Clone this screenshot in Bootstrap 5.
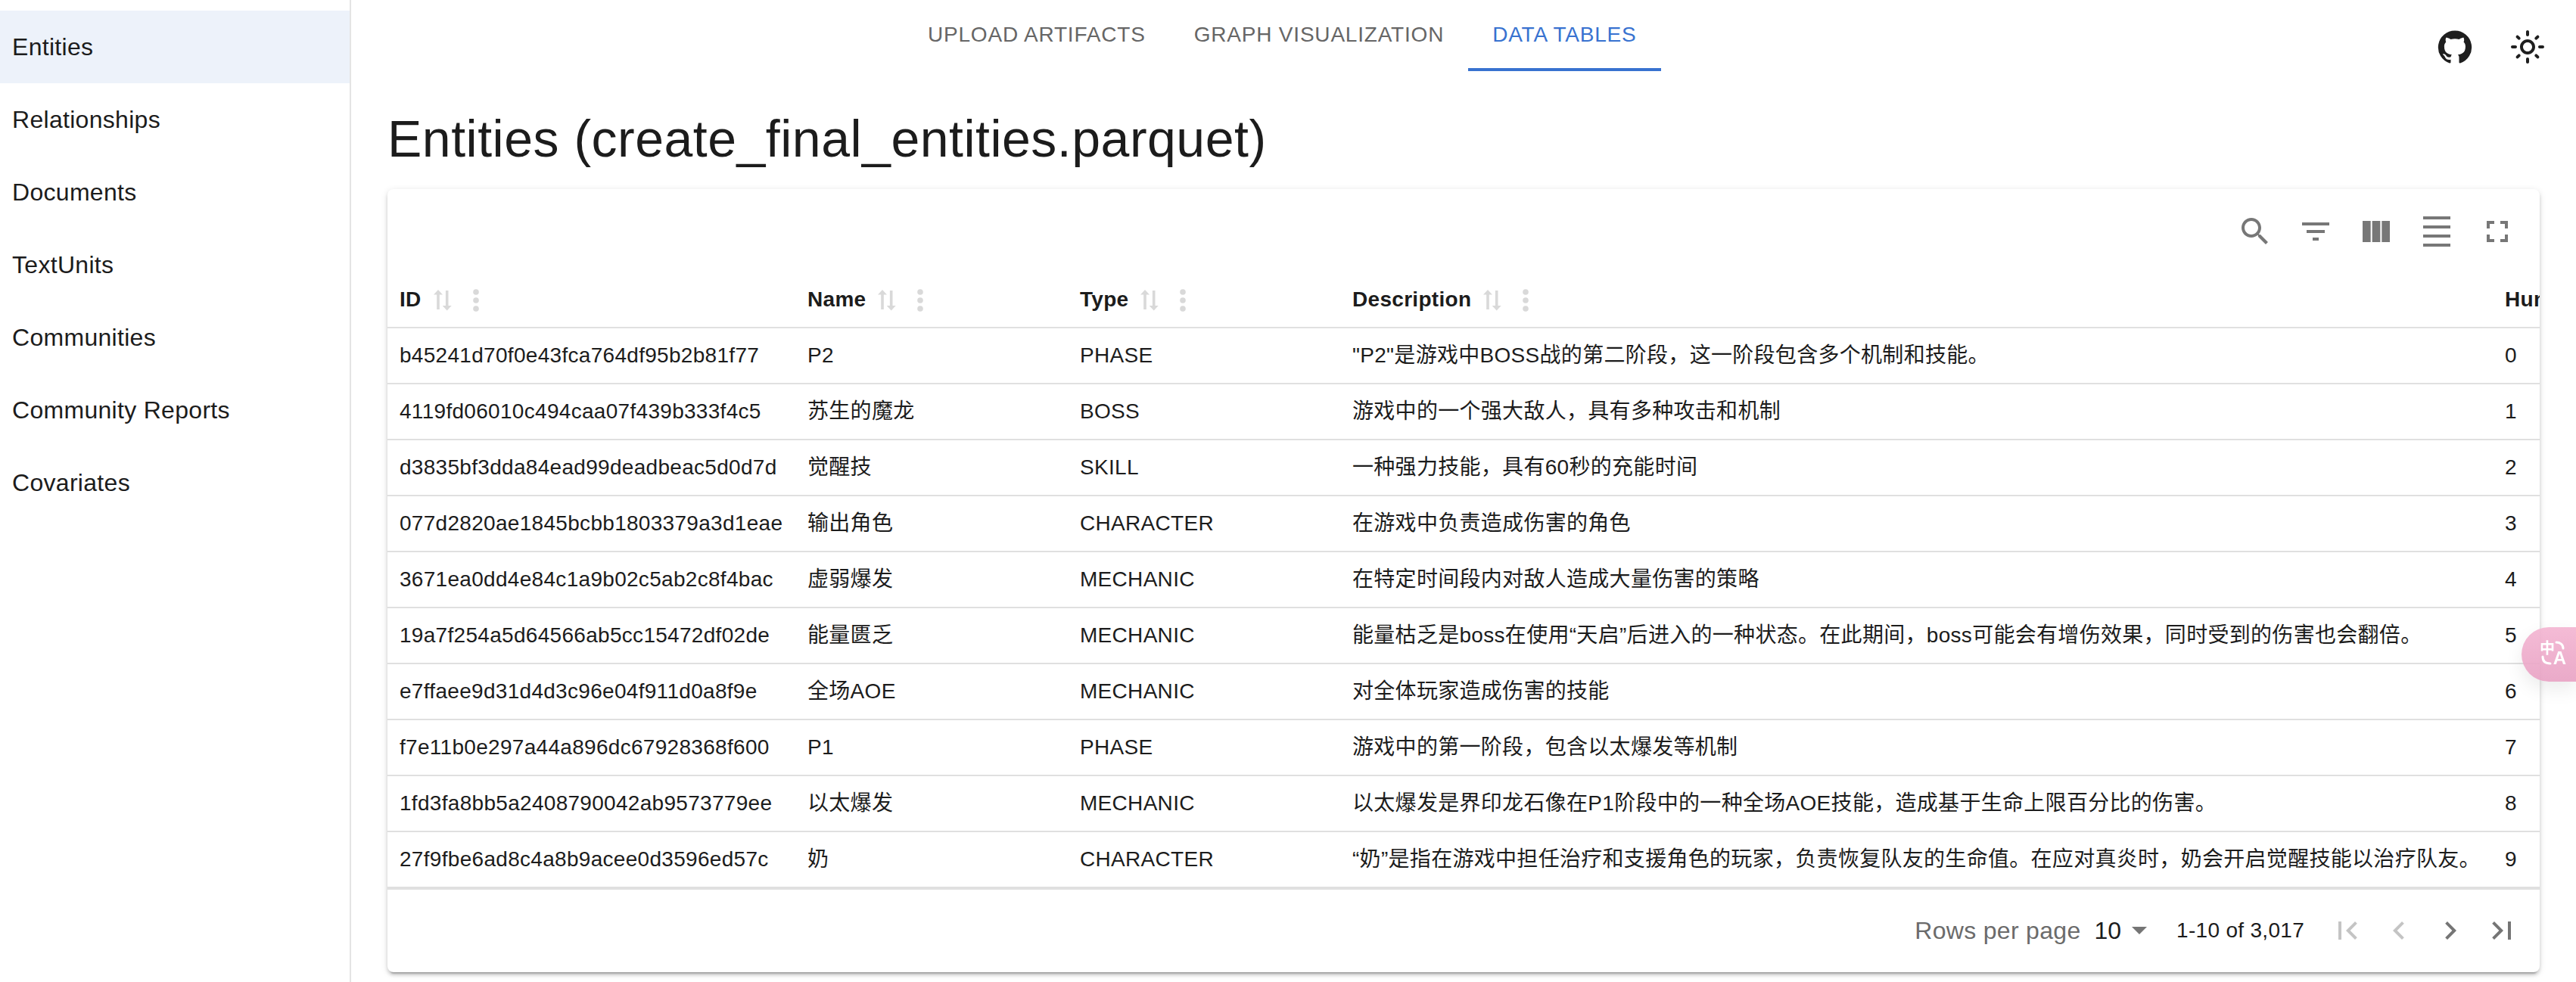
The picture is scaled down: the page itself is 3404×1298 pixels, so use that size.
<!DOCTYPE html>
<html lang="zh">
<head>
  <meta charset="UTF-8" />
  <meta name="viewport" content="width=device-width, initial-scale=1" />
  <title>GraphRAG Visualizer</title>
  <link href="https://cdn.jsdelivr.net/npm/bootstrap@5.3.3/dist/css/bootstrap.min.css" rel="stylesheet" />
  <style>
    html, body { height: 1298px; overflow: hidden; }
    body { font-family: "Liberation Sans", "Noto Sans CJK SC", sans-serif; color: #1c1c1c; background: #fff; }

    .side-drawer { width: 464px; flex: none; height: 1298px; border-right: 2px solid #e4e4e4; padding-top: 14px; }
    .side-item { height: 96px; padding: 0 16px; font-size: 32px; letter-spacing: .3px; display: flex; align-items: center; color: #1c1c1c; border: 0; }
    .side-item.active { background: #edf2fa; color: #1c1c1c; }

    .main-pane { min-width: 0; }
    .tab-bar { height: 94px; padding-left: 730px; }
    .tab-item { height: 94px; padding: 2px 32px 0; font-size: 28px; letter-spacing: .8px; text-transform: uppercase; color: #666; display: flex; align-items: center; border-bottom: 4px solid transparent; }
    .tab-item.active { color: #3872d0; border-bottom-color: #3872d0; }
    .top-icons { gap: 48px; padding: 38px 40px 0 0; }
    .top-icons svg { width: 48px; height: 48px; fill: #1f1f1f; display: block; }

    .content-wrap { margin: 0 48px; }
    .page-title { font-size: 68px; line-height: 84px; font-weight: 400; letter-spacing: .5px; margin: 47px 0 25px; }

    .data-paper { height: 1035px; border: 0; border-radius: 8px; overflow: hidden;
      box-shadow: 0 6px 2px -4px rgba(0,0,0,.2), 0 4px 4px rgba(0,0,0,.14), 0 2px 10px rgba(0,0,0,.12); }
    .tool-row { height: 96px; padding: 16px 16px 0 0; }
    .tool-btn { width: 80px; height: 80px; display: flex; align-items: center; justify-content: center; }
    .tool-btn svg { width: 48px; height: 48px; fill: #777; }

    .grid-clip { overflow: hidden; }
    .grid-table { table-layout: fixed; width: 2982px; margin: 0; font-size: 28px; letter-spacing: .3px; color: #1c1c1c; }
    .grid-table th, .grid-table td { padding: 0 16px; vertical-align: middle; white-space: nowrap; overflow: hidden; border-bottom: 2px solid #e0e0e0; }
    .grid-table th { height: 87px; font-weight: 700; }
    .grid-table td { height: 74px; }
    .head-wrap { display: flex; align-items: center; padding-top: 14px; }
    .head-wrap svg { width: 36px; height: 36px; margin-left: 9px; flex: none; fill: #d9d9d9; }

    .pager-row { height: 110px; border-top: 2px solid #e0e0e0; padding-right: 16px; }
    .rows-label { font-size: 32px; letter-spacing: .3px; color: #6b6b6b; }
    .rows-value { font-size: 32px; margin-left: 18px; }
    .rows-caret { width: 0; height: 0; margin: 0 39px 0 14px; border-left: 10px solid transparent; border-right: 10px solid transparent; border-top: 10px solid #757575; }
    .rows-range { font-size: 28px; letter-spacing: .3px; margin-right: 23px; }
    .page-btn { width: 68px; height: 48px; display: flex; justify-content: center; }
    .page-btn svg { width: 48px; height: 48px; fill: #757575; }
    .page-btn.off svg { fill: #c4c4c4; }

    .translate-tab { position: fixed; right: 0; top: 829px; width: 72px; height: 72px; border-radius: 36px 0 0 36px;
      background: linear-gradient(180deg, rgba(243,178,208,.88), rgba(231,158,193,.88)); box-shadow: 0 10px 24px rgba(0,0,0,.08); }
    .translate-tab svg { display: block; width: 72px; height: 72px; }
  </style>
</head>
<body>
  <div class="d-flex">
    <aside class="side-drawer">
      <div class="list-group list-group-flush">
        <div class="list-group-item side-item active">Entities</div>
        <div class="list-group-item side-item">Relationships</div>
        <div class="list-group-item side-item">Documents</div>
        <div class="list-group-item side-item">TextUnits</div>
        <div class="list-group-item side-item">Communities</div>
        <div class="list-group-item side-item">Community Reports</div>
        <div class="list-group-item side-item">Covariates</div>
      </div>
    </aside>

    <main class="main-pane flex-grow-1">
      <div class="d-flex tab-bar">
        <div class="tab-item">Upload Artifacts</div>
        <div class="tab-item">Graph Visualization</div>
        <div class="tab-item active">Data Tables</div>
        <div class="d-flex top-icons ms-auto">
          <svg viewBox="0 0 24 24"><path d="M12 1.27a11 11 0 00-3.48 21.46c.55.09.73-.28.73-.55v-1.84c-3.03.64-3.67-1.46-3.67-1.46-.55-1.29-1.28-1.65-1.28-1.65-.92-.65.1-.65.1-.65 1.1 0 1.73 1.1 1.73 1.1.92 1.65 2.57 1.2 3.21.92a2 2 0 01.64-1.47c-2.47-.27-5.04-1.19-5.04-5.5 0-1.1.46-2.1 1.2-2.84a3.76 3.76 0 010-2.93s.91-.28 3.11 1.1c1.8-.49 3.7-.49 5.5 0 2.1-1.38 3.02-1.1 3.02-1.1a3.76 3.76 0 010 2.93c.83.74 1.2 1.74 1.2 2.94 0 4.21-2.57 5.13-5.04 5.4.45.37.82.92.82 2.02v3.03c0 .27.1.64.73.55A11 11 0 0012 1.27"/></svg>
          <svg viewBox="0 0 24 24"><path d="M12 9c1.65 0 3 1.35 3 3s-1.35 3-3 3-3-1.35-3-3 1.35-3 3-3m0-2c-2.76 0-5 2.24-5 5s2.24 5 5 5 5-2.24 5-5-2.24-5-5-5zM2 13h2c.55 0 1-.45 1-1s-.45-1-1-1H2c-.55 0-1 .45-1 1s.45 1 1 1zm18 0h2c.55 0 1-.45 1-1s-.45-1-1-1h-2c-.55 0-1 .45-1 1s.45 1 1 1zM11 2v2c0 .55.45 1 1 1s1-.45 1-1V2c0-.55-.45-1-1-1s-1 .45-1 1zm0 18v2c0 .55.45 1 1 1s1-.45 1-1v-2c0-.55-.45-1-1-1s-1 .45-1 1zM5.99 4.58c-.39-.39-1.03-.39-1.41 0-.39.39-.39 1.03 0 1.41l1.06 1.06c.39.39 1.03.39 1.41 0s.39-1.03 0-1.41L5.99 4.58zm12.37 12.37c-.39-.39-1.03-.39-1.41 0-.39.39-.39 1.03 0 1.41l1.06 1.06c.39.39 1.03.39 1.41 0 .39-.39.39-1.03 0-1.41l-1.06-1.06zm1.06-10.96c.39-.39.39-1.03 0-1.41-.39-.39-1.03-.39-1.41 0l-1.06 1.06c-.39.39-.39 1.03 0 1.41s1.03.39 1.41 0l1.06-1.06zM7.05 18.36c.39-.39.39-1.03 0-1.41-.39-.39-1.03-.39-1.41 0l-1.06 1.06c-.39.39-.39 1.03 0 1.41s1.03.39 1.41 0l1.06-1.06z"/></svg>
        </div>
      </div>

      <div class="content-wrap">
        <h1 class="page-title">Entities (create_final_entities.parquet)</h1>

        <div class="card data-paper">
          <div class="d-flex justify-content-end tool-row">
            <div class="tool-btn"><svg viewBox="0 0 24 24"><path d="M15.5 14h-.79l-.28-.27C15.41 12.59 16 11.11 16 9.5 16 5.91 13.09 3 9.5 3S3 5.91 3 9.5 5.91 16 9.5 16c1.61 0 3.09-.59 4.23-1.57l.27.28v.79l5 4.99L20.49 19l-4.99-5zm-6 0C7.01 14 5 11.99 5 9.5S7.01 5 9.5 5 14 7.01 14 9.5 11.99 14 9.5 14z"/></svg></div>
            <div class="tool-btn"><svg viewBox="0 0 24 24"><path d="M10 18h4v-2h-4v2zM3 6v2h18V6H3zm3 7h12v-2H6v2z"/></svg></div>
            <div class="tool-btn"><svg viewBox="0 0 24 24"><path d="M14.67 5v14H9.33V5h5.34zm1 14H21V5h-5.33v14zm-7.34 0V5H3v14h5.33z"/></svg></div>
            <div class="tool-btn"><svg viewBox="0 0 24 24"><path d="M3 2h18v2H3zm0 18h18v2H3zm0-6h18v2H3zm0-6h18v2H3z"/></svg></div>
            <div class="tool-btn"><svg viewBox="0 0 24 24"><path d="M7 14H5v5h5v-2H7v-3zm-2-4h2V7h3V5H5v5zm12 7h-3v2h5v-5h-2v3zM14 5v2h3v3h2V5h-5z"/></svg></div>
          </div>

          <div class="grid-clip">
            <table class="table grid-table">
              <colgroup>
                <col style="width: 539px" /><col style="width: 360px" /><col style="width: 360px" /><col style="width: 1523px" /><col style="width: 200px" />
              </colgroup>
              <thead><tr id="headRow"></tr></thead>
              <tbody id="bodyRows"></tbody>
            </table>
          </div>

          <div class="d-flex justify-content-end align-items-center pager-row">
            <span class="rows-label">Rows per page</span>
            <span class="rows-value">10</span>
            <span class="rows-caret"></span>
            <span class="rows-range">1-10 of 3,017</span>
            <div class="page-btn off"><svg viewBox="0 0 24 24"><path d="M18.41 16.59 13.82 12l4.59-4.59L17 6l-6 6 6 6zM6 6h2v12H6z"/></svg></div>
            <div class="page-btn off"><svg viewBox="0 0 24 24"><path d="M15.41 7.41 14 6l-6 6 6 6 1.41-1.41L10.83 12z"/></svg></div>
            <div class="page-btn"><svg viewBox="0 0 24 24"><path d="M10 6 8.59 7.41 13.17 12l-4.58 4.59L10 18l6-6z"/></svg></div>
            <div class="page-btn"><svg viewBox="0 0 24 24"><path d="M5.59 7.41 10.18 12l-4.59 4.59L7 18l6-6-6-6zM16 6h2v12h-2z"/></svg></div>
          </div>
        </div>
      </div>
    </main>
  </div>

  <div class="translate-tab">
    <svg viewBox="0 0 72 72">
      <text x="34" y="35" text-anchor="middle" font-size="20" font-weight="700" fill="#fff" font-family="Noto Sans CJK SC, sans-serif">中</text>
      <text x="50.5" y="49" text-anchor="middle" font-size="24" font-weight="700" fill="#fff" font-family="Liberation Sans, sans-serif">A</text>
      <path d="M46 20c5 0 9 3 9 8M28 39c0 6 3 9 10 9" fill="none" stroke="#fff" stroke-width="3" stroke-linecap="round"/>
    </svg>
  </div>

  <script src="https://cdn.jsdelivr.net/npm/bootstrap@5.3.3/dist/js/bootstrap.bundle.min.js"></script>
  <script>
    const columns = ["ID", "Name", "Type", "Description", "Human readable ID"];

    const rows = [
      ["b45241d70f0e43fca764df95b2b81f77", "P2", "PHASE", "\"P2\"是游戏中BOSS战的第二阶段，这一阶段包含多个机制和技能。"],
      ["4119fd06010c494caa07f439b333f4c5", "苏生的魔龙", "BOSS", "游戏中的一个强大敌人，具有多种攻击和机制"],
      ["d3835bf3dda84ead99deadbeac5d0d7d", "觉醒技", "SKILL", "一种强力技能，具有60秒的充能时间"],
      ["077d2820ae1845bcbb1803379a3d1eae", "输出角色", "CHARACTER", "在游戏中负责造成伤害的角色"],
      ["3671ea0dd4e84c1a9b02c5ab2c8f4bac", "虚弱爆发", "MECHANIC", "在特定时间段内对敌人造成大量伤害的策略"],
      ["19a7f254a5d64566ab5cc15472df02de", "能量匮乏", "MECHANIC", "能量枯乏是boss在使用“天启”后进入的一种状态。在此期间，boss可能会有增伤效果，同时受到的伤害也会翻倍。"],
      ["e7ffaee9d31d4d3c96e04f911d0a8f9e", "全场AOE", "MECHANIC", "对全体玩家造成伤害的技能"],
      ["f7e11b0e297a44a896dc67928368f600", "P1", "PHASE", "游戏中的第一阶段，包含以太爆发等机制"],
      ["1fd3fa8bb5a2408790042ab9573779ee", "以太爆发", "MECHANIC", "以太爆发是界印龙石像在P1阶段中的一种全场AOE技能，造成基于生命上限百分比的伤害。"],
      ["27f9fbe6ad8c4a8b9acee0d3596ed57c", "奶", "CHARACTER", "“奶”是指在游戏中担任治疗和支援角色的玩家，负责恢复队友的生命值。在应对真炎时，奶会开启觉醒技能以治疗队友。"]
    ];

    // long thin arrows, MUI's SwapVert is too stubby for this one
    const sortIcon = '<svg viewBox="0 0 36 36"><path d="M13 5l6 6.5h-4.2V31h-3.6V11.5H7z"/><path d="M22.9 6h3.6v20h4.2l-6 6.5-6-6.5h4.2z"/></svg>';
    const dotsIcon = '<svg viewBox="0 0 36 36"><circle cx="18" cy="8" r="3.8"/><circle cx="18" cy="19" r="3.8"/><circle cx="18" cy="30" r="3.8"/></svg>';

    document.getElementById("headRow").innerHTML = columns.map((name, i) => {
      const icons = i < 4 ? sortIcon + dotsIcon : "";
      return `<th><div class="head-wrap">${name}${icons}</div></th>`;
    }).join("");

    document.getElementById("bodyRows").innerHTML = rows.map((row, i) => {
      const cells = row.map(text => `<td>${text}</td>`).join("");
      return `<tr>${cells}<td>${i}</td></tr>`;
    }).join("");
  </script>
</body>
</html>
